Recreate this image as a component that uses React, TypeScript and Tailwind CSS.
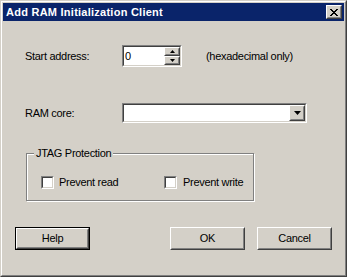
import React from "react";

const font = { fontFamily: '"Liberation Sans", Arial, sans-serif' };

function Raised({ children, className = "" }: { children?: React.ReactNode; className?: string }) {
  return (
    <div className={"bg-[#d4d0c8] border border-t-white border-l-white border-r-[#404040] border-b-[#404040] " + className}>
      <div className="w-full h-full border border-t-[#d4d0c8] border-l-[#d4d0c8] border-r-[#808080] border-b-[#808080] flex items-center justify-center">
        {children}
      </div>
    </div>
  );
}

function Sunken({ children, className = "" }: { children?: React.ReactNode; className?: string }) {
  return (
    <div className={"border border-t-[#808080] border-l-[#808080] border-r-white border-b-white " + className}>
      <div className="w-full h-full border border-t-[#404040] border-l-[#404040] border-r-[#d4d0c8] border-b-[#d4d0c8] bg-white flex">
        {children}
      </div>
    </div>
  );
}

function Arrow({ up = false, w = 7, h = 4 }: { up?: boolean; w?: number; h?: number }) {
  return (
    <svg width={w} height={h} viewBox={`0 0 ${w} ${h}`} className="block shrink-0">
      {up ? (
        <polygon points={`${w / 2},0 ${w},${h} 0,${h}`} fill="#000" />
      ) : (
        <polygon points={`0,0 ${w},0 ${w / 2},${h}`} fill="#000" />
      )}
    </svg>
  );
}

function CloseGlyph() {
  const rows: [number, number][][] = [
    [[0, 2], [6, 2]],
    [[1, 2], [5, 2]],
    [[2, 4]],
    [[3, 2]],
    [[2, 4]],
    [[1, 2], [5, 2]],
    [[0, 2], [6, 2]],
  ];
  return (
    <svg width="8" height="7" viewBox="0 0 8 7" className="block shrink-0" shapeRendering="crispEdges">
      {rows.map((r, y) =>
        r.map(([x, w], i) => <rect key={`${y}-${i}`} x={x} y={y} width={w} height={1} fill="#000" />)
      )}
    </svg>
  );
}

function Checkbox() {
  return <Sunken className="w-[13px] h-[13px]" />;
}

function PushButton({ label, isDefault = false }: { label: string; isDefault?: boolean }) {
  const inner = (
    <Raised className={isDefault ? "w-[73px] h-[21px]" : "w-[75px] h-[23px]"}>
      <span className="text-[11px] text-black leading-none">{label}</span>
    </Raised>
  );
  if (isDefault) {
    return <div className="w-[75px] h-[23px] border border-black">{inner}</div>;
  }
  return inner;
}

export default function App() {
  return (
    <div
      className="w-[347px] h-[277px] bg-[#d4d0c8] border border-t-[#d4d0c8] border-l-[#d4d0c8] border-r-[#404040] border-b-[#404040]"
      style={font}
    >
      <div className="w-full h-full border border-t-white border-l-white border-r-[#808080] border-b-[#808080] p-px flex flex-col">
        {/* Title bar */}
        <div className="h-[18px] bg-[#0a246a] flex items-center pl-[3px] pr-[2px] shrink-0">
          <span className="text-white font-bold text-[11px] leading-none tracking-[0.25px]">
            Add RAM Initialization Client
          </span>
          <Raised className="ml-auto w-[16px] h-[14px]">
            <CloseGlyph />
          </Raised>
        </div>

        {/* Content */}
        <div className="flex flex-col text-[11px] text-black tracking-[-0.3px]">
          {/* Start address */}
          <div className="mt-[24px] h-[22px] flex items-center pl-[22px]">
            <span className="w-[97px]">Start address:</span>
            <Sunken className="w-[60px] h-[22px]">
              <span className="flex-1 pl-[1px] flex items-center leading-none">0</span>
              <div className="w-[16px] flex flex-col">
                <Raised className="w-[16px] h-[9px]">
                  <Arrow up w={5} h={3} />
                </Raised>
                <Raised className="w-[16px] h-[9px]">
                  <Arrow w={5} h={3} />
                </Raised>
              </div>
            </Sunken>
            <span className="ml-[24px]">(hexadecimal only)</span>
          </div>

          {/* RAM core */}
          <div className="mt-[36px] h-[20px] flex items-center pl-[22px]">
            <span className="w-[97px]">RAM core:</span>
            <Sunken className="w-[185px] h-[20px]">
              <div className="flex-1" />
              <Raised className="w-[16px] h-[16px]">
                <Arrow w={7} h={4} />
              </Raised>
            </Sunken>
          </div>

          {/* JTAG Protection group */}
          <div className="mt-[30px] ml-[23px] w-[228px] h-[48px] relative border border-[#808080] shadow-[inset_1px_1px_0_#fff,1px_1px_0_#fff]">
            <span className="absolute left-[7px] top-[-8px] px-[2px] bg-[#d4d0c8] leading-[14px]">JTAG Protection</span>
            <div className="flex items-center pt-[20px] pl-[14px]">
              <Checkbox />
              <span className="ml-[5px] w-[105px]">Prevent read</span>
              <Checkbox />
              <span className="ml-[6px]">Prevent write</span>
            </div>
          </div>

          {/* Buttons */}
          <div className="mt-[26px] flex items-start pl-[12px]">
            <PushButton label="Help" isDefault />
            <div className="ml-[80px]">
              <PushButton label="OK" />
            </div>
            <div className="ml-[12px]">
              <PushButton label="Cancel" />
            </div>
          </div>
        </div>
      </div>
    </div>
  );
}
